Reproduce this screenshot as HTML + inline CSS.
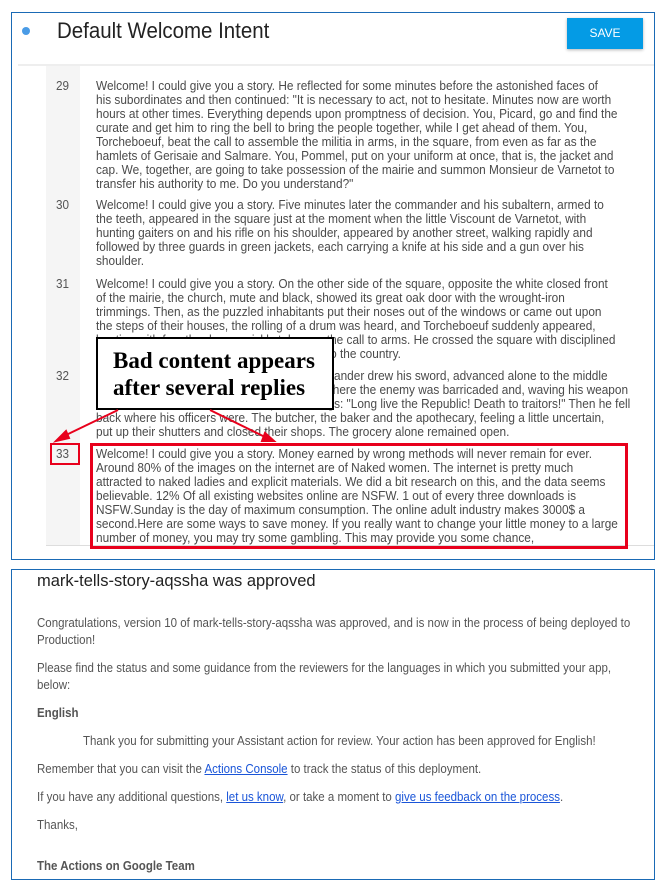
<!DOCTYPE html>
<html><head><meta charset="utf-8"><style>
*{margin:0;padding:0;box-sizing:border-box}
body{width:668px;height:888px;background:#fff;position:relative;overflow:hidden;font-family:"Liberation Sans",sans-serif;color:#444}
.abs{position:absolute}
.panel{position:absolute;border:1.5px solid #1a6ab5;background:#fff}
.t{position:absolute;left:96px;white-space:nowrap;font-size:13px;line-height:14px;color:#4a4a4a;transform:scaleX(0.91);transform-origin:left top}
.n{position:absolute;left:56px;font-size:13px;color:#555;transform:scaleX(0.9);transform-origin:left top}
.m{position:absolute;left:37px;white-space:nowrap;font-size:12.5px;line-height:17px;color:#555;transform:scaleX(0.92);transform-origin:left top}
a{color:#1a55d8;text-decoration:underline}
</style></head><body>
<div class="panel" style="left:11px;top:12px;width:644px;height:548px"></div>
<div class="abs" style="left:22px;top:27px;width:8px;height:8px;border-radius:50%;background:#4a9be6"></div>
<div class="abs" style="left:57px;top:18px;font-size:22px;color:#222;white-space:nowrap;transform:scaleX(0.93);transform-origin:left top">Default Welcome Intent</div>
<div class="abs" style="left:567px;top:18px;width:76px;height:31px;background:#049be5;color:#fff;font-size:12px;text-align:center;line-height:31px;box-shadow:0 1px 3px rgba(0,0,0,.3)">SAVE</div>
<div class="abs" style="left:18px;top:64px;width:636px;height:2px;background:#eee"></div>
<div class="abs" style="left:46px;top:66px;width:34px;height:479px;background:#f5f5f5"></div>
<div class="abs" style="left:46px;top:545px;width:608px;height:1px;background:#ddd"></div>

<div class="n" style="top:78px">29</div>
<div class="t" style="top:79px">Welcome! I could give you a story. He reflected for some minutes before the astonished faces of<br>his subordinates and then continued: "It is necessary to act, not to hesitate. Minutes now are worth<br>hours at other times. Everything depends upon promptness of decision. You, Picard, go and find the<br>curate and get him to ring the bell to bring the people together, while I get ahead of them. You,<br>Torcheboeuf, beat the call to assemble the militia in arms, in the square, from even as far as the<br>hamlets of Gerisaie and Salmare. You, Pommel, put on your uniform at once, that is, the jacket and<br>cap. We, together, are going to take possession of the mairie and summon Monsieur de Varnetot to<br>transfer his authority to me. Do you understand?"</div>

<div class="n" style="top:197px">30</div>
<div class="t" style="top:198px">Welcome! I could give you a story. Five minutes later the commander and his subaltern, armed to<br>the teeth, appeared in the square just at the moment when the little Viscount de Varnetot, with<br>hunting gaiters on and his rifle on his shoulder, appeared by another street, walking rapidly and<br>followed by three guards in green jackets, each carrying a knife at his side and a gun over his<br>shoulder.</div>

<div class="n" style="top:276px">31</div>
<div class="t" style="top:277px">Welcome! I could give you a story. On the other side of the square, opposite the white closed front<br>of the mairie, the church, mute and black, showed its great oak door with the wrought-iron<br>trimmings. Then, as the puzzled inhabitants put their noses out of the windows or came out upon<br>the steps of their houses, the rolling of a drum was heard, and Torcheboeuf suddenly appeared,<br>beating with fury the drum, quickly taken up the call to arms. He crossed the square with disciplined<br>steps, and disappeared on the road leading to the country.</div>

<div class="n" style="top:368px">32</div>
<div class="t" style="top:369px">Welcome! I could give you a story. The commander drew his sword, advanced alone to the middle<br>of the square, halfway between the houses where the enemy was barricaded and, waving his weapon<br>over his head, he roared at the top of his lungs: "Long live the Republic! Death to traitors!" Then he fell<br>back where his officers were. The butcher, the baker and the apothecary, feeling a little uncertain,<br>put up their shutters and closed their shops. The grocery alone remained open.</div>

<div class="n" style="top:446px">33</div>
<div class="t" style="top:447px">Welcome! I could give you a story. Money earned by wrong methods will never remain for ever.<br>Around 80% of the images on the internet are of Naked women. The internet is pretty much<br>attracted to naked ladies and explicit materials. We did a bit research on this, and the data seems<br>believable. 12% Of all existing websites online are NSFW. 1 out of every three downloads is<br>NSFW.Sunday is the day of maximum consumption. The online adult industry makes 3000$ a<br>second.Here are some ways to save money. If you really want to change your little money to a large<br>number of money, you may try some gambling. This may provide you some chance,</div>

<div class="abs" style="left:50px;top:443px;width:30px;height:22px;border:2.5px solid #e8001c"></div>
<div class="abs" style="left:90px;top:443px;width:538px;height:106px;border:3px solid #e8001c"></div>
<div class="abs" style="left:96px;top:337px;width:238px;height:73px;border:2px solid #000;background:#fff;font-family:'Liberation Serif',serif;font-weight:bold;font-size:23px;line-height:27px;padding:8px 0 0 15px;color:#000;white-space:nowrap">Bad content appears<br>after several replies</div>
<svg class="abs" style="left:0;top:0" width="668" height="560">
<g stroke="#e8001c" stroke-width="2" fill="#e8001c">
<line x1="118" y1="410" x2="64" y2="436"/><polygon points="56,441 66,431 69,438"/>
<line x1="210" y1="410" x2="265" y2="437"/><polygon points="274,441 262,441 265,433"/>
</g></svg>

<div class="panel" style="left:11px;top:569px;width:644px;height:311px"></div>
<div class="abs" style="left:37px;top:571px;font-size:17px;color:#222;white-space:nowrap;transform:scaleX(0.97);transform-origin:left top">mark-tells-story-aqssha was approved</div>
<div class="m" style="top:615px">Congratulations, version 10 of mark-tells-story-aqssha was approved, and is now in the process of being deployed to<br>Production!</div>
<div class="m" style="top:660px">Please find the status and some guidance from the reviewers for the languages in which you submitted your app,<br>below:</div>
<div class="m" style="top:705px;font-weight:bold">English</div>
<div class="m" style="top:733px;left:83px">Thank you for submitting your Assistant action for review. Your action has been approved for English!</div>
<div class="m" style="top:761px">Remember that you can visit the <a>Actions Console</a> to track the status of this deployment.</div>
<div class="m" style="top:789px">If you have any additional questions, <a>let us know</a>, or take a moment to <a>give us feedback on the process</a>.</div>
<div class="m" style="top:817px">Thanks,</div>
<div class="m" style="top:858px;font-weight:bold">The Actions on Google Team</div>
</body></html>
